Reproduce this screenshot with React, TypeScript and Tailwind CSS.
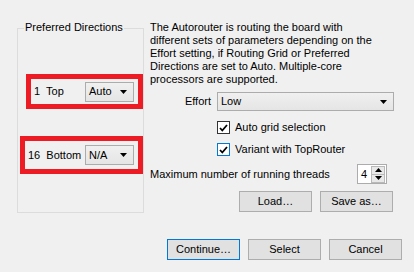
import React from "react";

const Arrow = () => (
  <svg width="7" height="4" viewBox="0 0 7 4" className="block">
    <path d="M0 0H7L3.5 4Z" fill="#000" />
  </svg>
);

const Combo = ({ value, w, h }: { value: string; w: string; h: string }) => (
  <div
    className={`${w} ${h} flex items-center justify-between border border-[#acacac] bg-gradient-to-b from-[#f0f0f0] to-[#e5e5e5] pl-[3px] pr-[6px]`}
  >
    <span>{value}</span>
    <Arrow />
  </div>
);

const Check = ({ blue }: { blue?: boolean }) => (
  <div
    className={`w-[13px] h-[13px] border ${blue ? "border-[#0078d7]" : "border-[#333333]"} bg-white flex items-center justify-center`}
  >
    <svg width="9" height="8" viewBox="0 0 9 8" className="block">
      <path d="M1 4L3.3 6.5L8 1" stroke="#000" strokeWidth="1.8" fill="none" />
    </svg>
  </div>
);

const Btn = ({ label, focus }: { label: string; focus?: boolean }) => (
  <div
    className={`w-[73px] h-[21px] flex items-center justify-center border ${focus ? "border-[#0078d7]" : "border-[#adadad]"} bg-[#e1e1e1]`}
  >
    {label}
  </div>
);

export default function App() {
  return (
    <div
      className="w-[414px] h-[272px] bg-[#f0f0f0] text-black text-[11px] leading-[13px] flex flex-col overflow-hidden"
      style={{ fontFamily: '"Liberation Sans", Arial, sans-serif' }}
    >
      <div className="flex">
        {/* Preferred Directions group */}
        <div className="relative ml-[17px] mt-[28px] w-[127px] h-[185px] border border-[#dcdcdc] flex flex-col">
          <span className="absolute top-[-8px] left-[6px] px-[1px] bg-[#f0f0f0] whitespace-nowrap">
            Preferred Directions
          </span>
          <div className="mt-[45px] ml-[8px] w-[117px] h-[35px] border-[5px] border-[#ed1c24] flex items-center justify-between pl-[3px] pr-[4px]">
            <span className="whitespace-pre">1  Top</span>
            <Combo value="Auto" w="w-[49px]" h="h-[20px]" />
          </div>
          <div className="mt-[27px] ml-[2px] w-[123px] h-[38px] border-[5px] border-[#ed1c24] flex items-center justify-between pl-[3px] pr-[4px]">
            <span className="whitespace-pre">16  Bottom</span>
            <Combo value="N/A" w="w-[49px]" h="h-[20px]" />
          </div>
        </div>

        {/* Right column */}
        <div className="ml-[6px] w-[244px] flex flex-col">
          <p className="mt-[21px] whitespace-nowrap">
            The Autorouter is routing the board with
            <br />
            different sets of parameters depending on the
            <br />
            Effort setting, if Routing Grid or Preferred
            <br />
            Directions are set to Auto. Multiple-core
            <br />
            processors are supported.
          </p>
          <div className="mt-[6px] flex items-center h-[19px]">
            <span className="w-[61px] text-right">Effort</span>
            <div className="ml-[6px]">
              <Combo value="Low" w="w-[177px]" h="h-[19px]" />
            </div>
          </div>
          <div className="mt-[10px] ml-[67px] flex items-center h-[13px] gap-[5px]">
            <Check />
            <span>Auto grid selection</span>
          </div>
          <div className="mt-[9px] ml-[67px] flex items-center h-[13px] gap-[5px]">
            <Check blue />
            <span>Variant with TopRouter</span>
          </div>
          <div className="mt-[8px] flex items-center justify-between h-[20px] w-[237px]">
            <span>Maximum number of running threads</span>
            <div className="w-[30px] h-[20px] border border-[#acacac] bg-white flex items-center justify-between pl-[3px] pr-[1px]">
              <span>4</span>
              <div className="w-[14px] h-[17px] flex flex-col">
                <div className="flex-1 border border-[#b9b9b9] bg-[#e8e8e8] flex items-center justify-center">
                  <svg width="7" height="4" viewBox="0 0 7 4" className="block">
                    <path d="M0 4H7L3.5 0Z" fill="#000" />
                  </svg>
                </div>
                <div className="flex-1 border border-t-0 border-[#b9b9b9] bg-[#e8e8e8] flex items-center justify-center">
                  <Arrow />
                </div>
              </div>
            </div>
          </div>
          <div className="mt-[7px] flex justify-end gap-[8px] w-[243px]">
            <Btn label="Load…" />
            <Btn label="Save as…" />
          </div>
        </div>
      </div>

      <div className="mt-[26px] ml-[167px] flex gap-[8px]">
        <Btn label="Continue…" focus />
        <Btn label="Select" />
        <Btn label="Cancel" />
      </div>
    </div>
  );
}
